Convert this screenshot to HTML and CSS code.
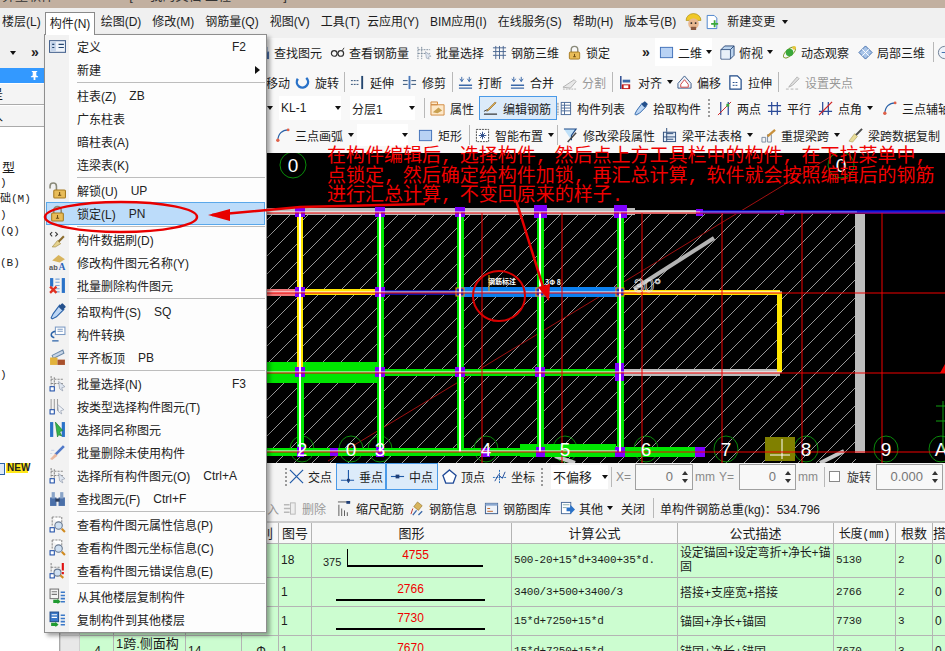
FILE: index.html
```html
<!DOCTYPE html>
<html lang="zh">
<head>
<meta charset="utf-8">
<title>钢筋算量软件</title>
<link rel="stylesheet" href="styles.css">
</head>
<body>
<svg class="defs" width="0" height="0">
<defs>
<symbol id="lock" viewBox="0 0 16 16"><path d="M4.500 8V5a3.500 3.500 0 0 1 7 0v3" fill="none" stroke="#8a8a7a" stroke-width="1.500"/><rect x="2.500" y="7.500" width="11" height="7.500" rx="1" fill="#e8bc58" stroke="#a57a20"/><path d="M8 9.500v3M6.500 12.500h3" stroke="#6b4a10"/></symbol>
<symbol id="unlock" viewBox="0 0 16 16"><path d="M1 6V4a3 3 0 0 1 6 0v4" fill="none" stroke="#8a8a7a" stroke-width="1.500"/><rect x="4.500" y="7.500" width="11" height="7.500" rx="1" fill="#e8bc58" stroke="#a57a20"/><path d="M10 9.500v3M8.500 12.500h3" stroke="#6b4a10"/></symbol>
<symbol id="def" viewBox="0 0 16 16"><rect x=".5" y="2.500" width="15" height="11" fill="#eef3fa" stroke="#47648f"/><rect x="1.500" y="3.500" width="5" height="9" fill="#c4d4ea"/><path d="M3 6h2M3 9h2M9 6h5M9 9h5" stroke="#24466f"/></symbol>
<symbol id="brush" viewBox="0 0 16 16"><path d="M1 3l2-2M1 3l2 2M6 1l2 2-2 2" fill="none" stroke="#333"/><path d="M14 5L8 11" stroke="#8a6b2c" stroke-width="2"/><path d="M8 9l3 3-5 3-3 0z" fill="#e5d28e" stroke="#a08a45" stroke-width=".6"/></symbol>
<symbol id="rename" viewBox="0 0 16 16"><path d="M3 6l6-5 6 4-5 3z" fill="#d8b45c"/><text x="0" y="15" class="icn" fill="#555">ab</text><text x="9" y="15" class="icb" fill="#2a62b8">A</text></symbol>
<symbol id="bdel" viewBox="0 0 16 16"><rect x="1" y="1" width="3" height="8" fill="#2a72c8"/><rect x="12" y="1" width="3" height="14" fill="#2a72c8"/><path d="M6 2h4M6 5h4M6 8h4M6 11h4M6 14h4" stroke="#7ca6d8"/><path d="M1 9l6 6M7 9l-6 6" stroke="#e03020" stroke-width="2.200"/></symbol>
<symbol id="pick" viewBox="0 0 16 16"><path d="M10 2l4 4-7 7-4 2-1-1 2-4z" fill="#bcd6f4" stroke="#2a62a8"/><rect x="10" y="1" width="5" height="5" rx="1" fill="#24508c" transform="rotate(45 12.500 3.500)"/></symbol>
<symbol id="conv" viewBox="0 0 16 16"><rect x="6" y="1" width="9" height="7" fill="#fff" stroke="#7b9ac4"/><path d="M8 3h5M8 5h5" stroke="#7b9ac4"/><path d="M6 5C1 6 1 10 5 11M3 14h6" fill="none" stroke="#2a62a8" stroke-width="1.400"/></symbol>
<symbol id="flush" viewBox="0 0 16 16"><path d="M3 6l10-5 1 3-10 5z" fill="#c8d6e8" stroke="#6b88a8"/><rect x="1" y="8" width="7" height="7" fill="#e2b23c"/><rect x="8" y="10" width="7" height="5" fill="#a8502c"/></symbol>
<symbol id="sel" viewBox="0 0 16 16"><path d="M2 1v11M5 2v10M2 4h12M2 8h12" stroke="#8a8a8a" stroke-dasharray="2 1"/><path d="M9 6l6 5-3 1 1 3-3-2z" fill="#dfe6f0" stroke="#8a96a8" stroke-width=".6"/><rect x="1" y="11" width="4" height="4" fill="#fff" stroke="#1f4fa8"/></symbol>
<symbol id="type" viewBox="0 0 16 16"><path d="M2 1v11M5 1v11M8 1v11" stroke="#a0a0a0"/><path d="M8 6l6 5-3 1 1 3-3-2z" fill="#eef2f8" stroke="#8a96a8" stroke-width=".6"/><rect x="1" y="11" width="4" height="4" fill="#fff" stroke="#1f4fa8"/></symbol>
<symbol id="same" viewBox="0 0 16 16"><rect x="1" y="1" width="3" height="14" fill="#2a72c8"/><rect x="12" y="1" width="3" height="14" fill="#2a72c8"/><path d="M6 1l7 8-3 1 2 4-3-1-1 2z" fill="#37b44a" stroke="#1b7a2c" stroke-width=".6"/></symbol>
<symbol id="unused" viewBox="0 0 16 16"><path d="M14 2L6 10" stroke="#5078c8" stroke-width="2.500"/><path d="M6 9l2 2-5 4-2-1z" fill="#e8b8a0"/><path d="M2 6h3M1 9h2" stroke="#d0d8e8"/></symbol>
<symbol id="binoc" viewBox="0 0 16 16"><rect x="1" y="7" width="6" height="8" fill="#4a6fa8"/><rect x="9" y="7" width="6" height="8" fill="#4a6fa8"/><rect x="2.500" y="2" width="3" height="6" fill="#8aa4c8"/><rect x="10.500" y="2" width="3" height="6" fill="#8aa4c8"/><rect x="6" y="8" width="4" height="3" fill="#2c3f60"/></symbol>
<symbol id="info" viewBox="0 0 16 16"><path d="M3 1h9v9M3 1v9" fill="#fff" stroke="#8a8a8a" stroke-dasharray="2 1"/><rect x="1" y="11" width="4" height="4" fill="#fff" stroke="#1f4fa8"/><circle cx="9" cy="9" r="3.500" fill="#cfe0f2" stroke="#6a7a90"/><path d="M12 12l3 3" stroke="#d08a20" stroke-width="2"/></symbol>
<symbol id="err" viewBox="0 0 16 16"><path d="M2 1v10M2 5h8" stroke="#8a8a8a" stroke-dasharray="2 1"/><rect x="1" y="11" width="4" height="4" fill="#fff" stroke="#1f4fa8"/><circle cx="8" cy="10" r="3.300" fill="#cfe0f2" stroke="#6a7a90"/><path d="M10.500 12.500l3 2.500" stroke="#d08a20" stroke-width="2"/><path d="M13 1v7M13 9.500v2" stroke="#e01010" stroke-width="2"/></symbol>
<symbol id="cfrom" viewBox="0 0 16 16"><rect x="1" y="1" width="8" height="9" fill="#f4f4f4" stroke="#777"/><path d="M2.500 3.500h5M2.500 6h5" stroke="#777"/><path d="M4 11h4v-1l3 3-3 2v-1H4z" fill="#1f9a30"/><path d="M11 4h4M11 7h4M11 10h4M11 13h4" stroke="#3a78c8" stroke-width="1.500"/></symbol>
<symbol id="cto" viewBox="0 0 16 16"><rect x="1" y="1" width="8" height="9" fill="#3a78c8" stroke="#24508c"/><path d="M2.500 3.500h5M2.500 6h5" stroke="#fff"/><path d="M2 11h4v-1l3 3-3 2v-1H2z" fill="#1f9a30"/><path d="M11 4h4M11 7h4M11 10h4M11 13h4" stroke="#3a78c8" stroke-width="1.500"/></symbol>
<symbol id="glasses" viewBox="0 0 16 16"><circle cx="4.500" cy="9" r="3" fill="none" stroke="#333" stroke-width="1.300"/><circle cx="11.500" cy="9" r="3" fill="none" stroke="#333" stroke-width="1.300"/><path d="M7.500 9h1M13 6l2-3" stroke="#333"/></symbol>
<symbol id="batch" viewBox="0 0 16 16"><path d="M1 2v13M5 2v13M1 5h13M1 9h13" stroke="#7a8a9a" stroke-dasharray="2 1"/><path d="M9 7l6 5-3 1 1 2-3-1z" fill="#dfe6f0" stroke="#8a96a8" stroke-width=".6"/></symbol>
<symbol id="rebar3" viewBox="0 0 16 16"><path d="M1 3h14M1 7h14M1 11h14M4 1v14M8 1v14M12 1v14" stroke="#47648f"/></symbol>
<symbol id="sq2" viewBox="0 0 16 16"><rect x="1.500" y="2.500" width="13" height="11" fill="#b8d2f4" stroke="#3f6fb8"/></symbol>
<symbol id="cube" viewBox="0 0 16 16"><path d="M1 5l4-4h10v10l-4 4H1z" fill="#bcd4ee" stroke="#2c4a78"/><path d="M1 5h10v10M11 5l4-4" fill="none" stroke="#2c4a78"/><rect x="1.500" y="5.500" width="9" height="9" fill="#e8f0f8"/></symbol>
<symbol id="orbit" viewBox="0 0 16 16"><ellipse cx="8" cy="8" rx="8" ry="3.500" fill="none" stroke="#7a9a2c" transform="rotate(-40 8 8)"/><circle cx="8" cy="8" r="4" fill="#3aa83a"/><circle cx="13" cy="3" r="2" fill="#e8c83c"/></symbol>
<symbol id="part3" viewBox="0 0 16 16"><path d="M8 1l7 7-7 7-7-7z" fill="#a8c4e8" stroke="#3a68a8"/><path d="M4.500 4.500l7 7M11.500 4.500l-7 7" stroke="#fff"/></symbol>
<symbol id="ext" viewBox="0 0 16 16"><path d="M1 6h9M1 10h9" stroke="#24466f" stroke-dasharray="2 1"/><rect x="12" y="1" width="2" height="14" fill="#24466f"/></symbol>
<symbol id="trim" viewBox="0 0 16 16"><path d="M1 6h5M1 10h5M10 6h5M10 10h5" stroke="#24466f"/><rect x="7" y="1" width="2" height="14" fill="#4a78b8"/></symbol>
<symbol id="brk" viewBox="0 0 16 16"><path d="M1 11h14M1 14h14" stroke="#3a68a8" stroke-width="1.500"/><path d="M4 2v5M2 4l2 3 2-3M12 2v5M10 4l2 3 2-3" fill="none" stroke="#3a68a8"/></symbol>
<symbol id="split" viewBox="0 0 16 16"><path d="M1 13l12-8 2 2-6 7z" fill="#e8e8e8" stroke="#b0b0b0"/><path d="M1 15h14" stroke="#b0b0b0" stroke-dasharray="2 1"/></symbol>
<symbol id="aln" viewBox="0 0 16 16"><path d="M3 1v14" stroke="#1f3f88" stroke-width="1.500"/><rect x="5" y="5" width="8" height="3" fill="#3a68a8"/><rect x="4" y="10" width="9" height="5" fill="#c01818"/><rect x="6" y="11" width="5" height="3" fill="#fff"/></symbol>
<symbol id="off" viewBox="0 0 16 16"><path d="M1 14V9l7-8 7 8v5z" fill="#eef2f8" stroke="#3a5a88"/><path d="M4 13V10l4-5 4 5v3z" fill="#fff" stroke="#d04040"/></symbol>
<symbol id="strch" viewBox="0 0 16 16"><path d="M2 1h8l4 4v10H2z" fill="#fff" stroke="#1f4a88" stroke-width="1.300"/><path d="M5 8h6M5 11h6" stroke="#1f4a88" stroke-dasharray="2 1"/></symbol>
<symbol id="grip" viewBox="0 0 16 16"><path d="M13 2L6 10l-2 3 4-2 7-7z" fill="#e0e0e0" stroke="#b0b0b0"/><path d="M1 15h3M6 15h3M11 15h3" stroke="#b0b0b0"/></symbol>
<symbol id="prop" viewBox="0 0 16 16"><path d="M1 4h14v11H1zM1 1h7v3H1z" fill="#fde8c8" stroke="#d08a40"/><path d="M3 12l6-5 4 3-5 3z" fill="#c8a050"/></symbol>
<symbol id="edit" viewBox="0 0 16 16"><path d="M1 14h14" stroke="#333" stroke-width="1.300"/><path d="M1 11l4-2" stroke="#333"/><path d="M14 2L6 10l-2 1 1-2 8-8z" fill="#e8b050" stroke="#7a5a20" stroke-width=".6"/></symbol>
<symbol id="lst" viewBox="0 0 16 16"><path d="M1 2v13" stroke="#777" stroke-dasharray="2 1"/><rect x="4.500" y="1.500" width="10" height="13" fill="#fff" stroke="#4a6a98"/><path d="M4.500 4.500h10M4.500 7.500h10M4.500 10.500h10M8 1.500v13" stroke="#4a6a98"/></symbol>
<symbol id="twop" viewBox="0 0 16 16"><path d="M4 1v14M12 1v14" stroke="#2a4a98" stroke-width="1.300"/><path d="M1 15L15 1" stroke="#d02020"/><rect x="10" y="3" width="3" height="3" fill="#3aa83a"/></symbol>
<symbol id="para" viewBox="0 0 16 16"><path d="M5 1v14M11 1v14M1 5h14M1 11h14" stroke="#2a4a98" stroke-width="1.300"/></symbol>
<symbol id="angl" viewBox="0 0 16 16"><path d="M5 1v14M11 1v14M1 11h14" stroke="#2a4a98" stroke-width="1.300"/><path d="M1 15L15 1" stroke="#d02020" stroke-width="1.300"/></symbol>
<symbol id="arcp" viewBox="0 0 16 16"><path d="M3 14C3 6 8 2 14 2" fill="none" stroke="#2a62a8" stroke-width="1.300"/><circle cx="3" cy="13" r="1.800" fill="#e06048"/><circle cx="14" cy="2" r="1.500" fill="#e06048"/></symbol>
<symbol id="smart" viewBox="0 0 16 16"><rect x="1.500" y="1.500" width="13" height="13" fill="#fff" stroke="#444" stroke-dasharray="2 1"/><path d="M8 4v8M4 8h8M5.500 5.500l5 5M10.500 5.500l-5 5" stroke="#2a4a88"/></symbol>
<symbol id="fnl" viewBox="0 0 16 16"><path d="M1 1h13L9 8v5" fill="#bfe0f8" stroke="#1f4a88" stroke-width="1.200"/><path d="M5 15l9-10" stroke="#444" stroke-width="1.600"/></symbol>
<symbol id="grid" viewBox="0 0 16 16"><rect x="1.500" y="4.500" width="13" height="10" fill="#e4ecf6" stroke="#2a4a78"/><path d="M1.500 9.500h13M5 4.500v10M5 0v4M5 6h7M5 12h7" stroke="#2a4a78"/></symbol>
<symbol id="span" viewBox="0 0 16 16"><path d="M1 15v-5h4v5zM7 15V7h4v8z" fill="#f4f4f4" stroke="#7a8aa0"/><path d="M15 2L7 9" stroke="#c8903c" stroke-width="2.400"/></symbol>
<symbol id="bbrush" viewBox="0 0 16 16"><path d="M15 1L8 8" stroke="#4a4a4a" stroke-width="2"/><path d="M7 6l3 3-5 6-4-1z" fill="#e8dc98" stroke="#a89a50" stroke-width=".6"/></symbol>
<symbol id="cross" viewBox="0 0 16 16"><path d="M1 1l14 14M15 1L1 15" stroke="#1f5aa8" stroke-width="1.300"/></symbol>
<symbol id="perp" viewBox="0 0 16 16"><path d="M1 12h14M9 1v14" stroke="#1f5aa8" stroke-width="1.200"/><rect x="7.500" y="10.500" width="3" height="3" fill="#1f3f78"/></symbol>
<symbol id="mid" viewBox="0 0 16 16"><path d="M1 8h14" stroke="#1f5aa8" stroke-width="1.200"/><rect x="6" y="6" width="4" height="4" fill="#1f3f78"/></symbol>
<symbol id="top" viewBox="0 0 16 16"><path d="M8 1l7 6-3 8H4L1 7z" fill="#fff" stroke="#1f4a98" stroke-width="1.400"/></symbol>
<symbol id="coord" viewBox="0 0 16 16"><path d="M1 9h14M8 1v14" stroke="#1f6ab8" stroke-dasharray="2 1"/><path d="M3 13l4-7 4 4 3-7" fill="none" stroke="#1f4a98"/></symbol>
<symbol id="scale" viewBox="0 0 16 16"><path d="M1 1h13M2 4v12M5 8v8M8 10v6M11 12v4" stroke="#555"/><rect x="10" y="0" width="4" height="3" fill="#1f3f78"/></symbol>
<symbol id="rinfo" viewBox="0 0 16 16"><path d="M8 1l5 4-4 5-5-4z" fill="#d8b45c" stroke="#8a6a20" stroke-width=".6"/><path d="M3 15l4-5M9 15l4-4" stroke="#3a68a8" stroke-width="1.400"/><path d="M3 8l-2 6" stroke="#c03020"/></symbol>
<symbol id="rlib" viewBox="0 0 16 16"><rect x="1.500" y="2.500" width="13" height="11" fill="#eef3fa" stroke="#3a5a88"/><rect x="1.500" y="2.500" width="13" height="2.500" fill="#8aa8d0"/><path d="M3.500 8h3M3.500 11h6" stroke="#c06020"/></symbol>
<symbol id="other" viewBox="0 0 16 16"><rect x="1.500" y="1.500" width="10" height="12" fill="#fff" stroke="#4a6a98"/><path d="M3 4h7M3 7h4" stroke="#8aa"/><path d="M7 7h4V4l5 5-5 5v-3H7z" fill="#2a72c8"/></symbol>
<symbol id="ghost" viewBox="0 0 16 16"><path d="M1 4h6M1 12h6M1 8h9" stroke="#b8b8b8" stroke-width="1.500"/><rect x="8" y="2" width="5" height="12" fill="#eee" stroke="#b8b8b8"/></symbol>
<symbol id="refresh" viewBox="0 0 16 16"><path d="M12 3A6 6 0 1 1 3 4" fill="none" stroke="#2a72c8" stroke-width="2.600"/></symbol>
<symbol id="person" viewBox="0 0 16 16"><path d="M1 7a7 6.500 0 0 1 14 0z" fill="#f0c828" stroke="#a88a10" stroke-width=".6"/><circle cx="8" cy="10" r="5" fill="#e8b890"/><circle cx="6" cy="9.500" r=".9" fill="#222"/><circle cx="10" cy="9.500" r=".9" fill="#222"/><path d="M5.500 13h5v3h-5z" fill="#8a5a40"/></symbol>
<symbol id="newc" viewBox="0 0 16 16"><path d="M2.500.5h8l3 3v12h-11z" fill="#fff" stroke="#3a78c8"/><path d="M7 9h3V6h2v3h3v2h-3v3h-2v-3H7z" fill="#3aa83a"/></symbol>
<symbol id="zoomg" viewBox="0 0 16 16"><circle cx="8" cy="8" r="6.500" fill="#eef3fa" stroke="#6a7a90"/><path d="M5 8h6" stroke="#3a68a8"/></symbol>
</defs>
</svg>

<div class="app">
<header class="titlebar"><span class="ttext">算量软件 GGJ2013</span><span class="ttext tpath">[D:\我的文档\工程1.GGJ12]</span></header>

<nav class="menubar">
<span class="mb mb1">楼层(L)</span><span class="mb mb2 open">构件(N)</span><span class="mb">绘图(D)</span><span class="mb">修改(M)</span><span class="mb">钢筋量(Q)</span><span class="mb">视图(V)</span><span class="mb mbt">工具(T)</span><span class="mb">云应用(Y)</span><span class="mb">BIM应用(I)</span><span class="mb">在线服务(S)</span><span class="mb">帮助(H)</span><span class="mb">版本号(B)</span>
<svg class="ic ic-av"><use href="#person"/></svg><svg class="ic ic-new"><use href="#newc"/></svg><span class="mb mbn">新建变更</span><i class="caret"></i>
</nav>

<div class="body">
<aside class="side">
<div class="sidebar-top"><i class="caret side-caret"></i><span class="chev">»</span></div>
<div class="side-title"><svg class="pin" viewBox="0 0 10 12"><path d="M2 1h6v1H7v4l2 1v1H6v3H4V8H1V7l2-1V2H2z" fill="#fff"/></svg></div>
<div class="side-tab">是</div>
<div class="side-tab">入</div>
<ul class="tree">
<li class="t-first">型</li><li>)</li><li>础(M)</li><li>)</li><li>(Q)</li><li></li><li>(B)</li><li></li><li></li><li></li><li></li><li></li><li></li><li>)</li><li></li><li></li><li></li><li></li><li></li>
<li class="t-new"><span class="t-doc"></span><span class="t-badge">NEW</span></li>
</ul>
</aside>

<main class="main">
<div class="bar r1">
<div class="tool"><svg class="ic"><use href="#binoc"/></svg>查找图元</div>
<div class="tool"><svg class="ic"><use href="#glasses"/></svg>查看钢筋量</div>
<div class="tool"><svg class="ic"><use href="#batch"/></svg>批量选择</div>
<div class="tool"><svg class="ic"><use href="#rebar3"/></svg>钢筋三维</div>
<div class="tool"><svg class="ic"><use href="#lock"/></svg>锁定</div>
<div class="chev">»</div>
<div class="tool whitebox"><svg class="ic"><use href="#sq2"/></svg>二维<i class="caret car-r"></i></div>
<div class="tool"><svg class="ic"><use href="#cube"/></svg>俯视<i class="caret"></i></div>
<div class="tool"><svg class="ic"><use href="#orbit"/></svg>动态观察</div>
<div class="tool"><svg class="ic"><use href="#part3"/></svg>局部三维</div>
<div class="tool"><i class="vsep"></i><svg class="ic"><use href="#zoomg"/></svg></div>
</div>

<div class="bar r2">
<div class="tool">移动</div>
<div class="tool"><svg class="ic"><use href="#refresh"/></svg>旋转</div>
<i class="vsep"></i>
<div class="tool"><svg class="ic"><use href="#ext"/></svg>延伸</div>
<div class="tool"><svg class="ic"><use href="#trim"/></svg>修剪</div>
<i class="vsep"></i>
<div class="tool"><svg class="ic"><use href="#brk"/></svg>打断</div>
<div class="tool"><svg class="ic"><use href="#brk"/></svg>合并</div>
<div class="tool dis"><svg class="ic"><use href="#split"/></svg>分割</div>
<i class="vsep"></i>
<div class="tool"><svg class="ic"><use href="#aln"/></svg>对齐<i class="caret"></i></div>
<div class="tool"><svg class="ic"><use href="#off"/></svg>偏移</div>
<div class="tool"><svg class="ic"><use href="#strch"/></svg>拉伸</div>
<i class="vsep"></i>
<div class="tool dis"><svg class="ic"><use href="#grip"/></svg>设置夹点</div>
</div>

<div class="bar r3">
<i class="caret"></i>
<div class="combo">KL-1<i class="caret car-r"></i></div>
<div class="combo">分层1<i class="caret car-r"></i></div>
<i class="vsep"></i>
<div class="tool"><svg class="ic"><use href="#prop"/></svg>属性</div>
<div class="tool active"><svg class="ic"><use href="#edit"/></svg>编辑钢筋</div>
<div class="tool"><svg class="ic"><use href="#lst"/></svg>构件列表</div>
<div class="tool"><svg class="ic"><use href="#pick"/></svg>拾取构件</div>
<i class="dots"></i>
<div class="tool"><svg class="ic"><use href="#twop"/></svg>两点</div>
<div class="tool"><svg class="ic"><use href="#para"/></svg>平行</div>
<div class="tool"><svg class="ic"><use href="#angl"/></svg>点角<i class="caret"></i></div>
<div class="tool"><svg class="ic"><use href="#arcp"/></svg>三点辅轴</div>
</div>

<div class="bar r4">
<div class="tool"><svg class="ic"><use href="#arcp"/></svg>三点画弧<i class="caret"></i></div>
<div class="combo combo-e"><i class="caret car-r"></i></div>
<div class="tool"><svg class="ic"><use href="#sq2"/></svg>矩形</div>
<i class="vsep"></i>
<div class="tool"><svg class="ic"><use href="#smart"/></svg>智能布置<i class="caret"></i></div>
<i class="vsep"></i>
<div class="tool"><svg class="ic"><use href="#fnl"/></svg>修改梁段属性</div>
<div class="tool"><svg class="ic"><use href="#grid"/></svg>梁平法表格<i class="caret"></i></div>
<div class="tool"><svg class="ic"><use href="#span"/></svg>重提梁跨<i class="caret"></i></div>
<div class="tool"><svg class="ic"><use href="#bbrush"/></svg>梁跨数据复制</div>
</div>

<svg class="canvas" viewBox="60 152 885 310" width="885" height="310">
<defs>
<pattern id="hatch" width="18" height="18" patternUnits="userSpaceOnUse"><path d="M0 18L18 0" stroke="#d8d8d8" stroke-width=".7"/></pattern>
</defs>
<rect x="60" y="152" width="885" height="310" fill="#000"/>
<rect x="60" y="212" width="796" height="250" fill="url(#hatch)"/>
<path d="M328 460L840 150" stroke="#a01010" stroke-width="1"/>
<path d="M634 288L714 237" stroke="#b4b4b4" stroke-width="4"/>
<g class="axis">
<ellipse cx="293" cy="164" rx="13" ry="13"/><ellipse cx="841" cy="164" rx="13" ry="13"/>
<ellipse cx="302" cy="448" rx="12" ry="13"/><ellipse cx="351" cy="448" rx="12" ry="13"/><ellipse cx="380" cy="448" rx="12" ry="13"/><ellipse cx="486" cy="448" rx="12" ry="13"/><ellipse cx="565" cy="448" rx="12" ry="13"/><ellipse cx="646" cy="448" rx="12" ry="13"/><ellipse cx="726" cy="448" rx="12" ry="13"/><ellipse cx="806" cy="448" rx="12" ry="13"/><ellipse cx="886" cy="448" rx="12" ry="13"/><ellipse cx="941" cy="448" rx="12" ry="13"/>
</g>
<rect x="765" y="436" width="30" height="24" fill="#808000"/>
<path d="M782 438v20M770 454h20" stroke="#fff"/>
<path d="M555 455l20 7M820 462l24-12" stroke="#c4c4c4" stroke-width="4"/>
<rect x="855" y="212" width="10" height="240" fill="#bcbcbc"/>
<rect x="267" y="207" width="368" height="7" fill="#bcbcbc"/>
<rect x="635" y="209" width="70" height="4" fill="#bcbcbc"/>
<rect x="700" y="209" width="245" height="4" fill="#0000b0"/>
<rect x="267" y="361" width="111" height="21" fill="#00e600"/>
<rect x="378" y="368" width="242" height="7" fill="#00e600"/>
<rect x="620" y="368" width="160" height="7" fill="#bcbcbc"/>
<rect x="267" y="447" width="353" height="8" fill="#00e600"/>
<rect x="520" y="443" width="96" height="13" fill="#00e600"/>
<rect x="625" y="446" width="78" height="10" fill="#00e600"/>
<rect x="297" y="211" width="6" height="160" fill="#ffe600"/>
<g fill="#00e600"><rect x="297" y="371" width="7" height="80"/><rect x="377" y="211" width="7" height="240"/><rect x="457" y="211" width="7" height="240"/><rect x="537" y="211" width="7" height="240"/><rect x="617" y="211" width="7" height="240"/></g>
<rect x="267" y="288" width="33" height="7" fill="#f07878"/>
<rect x="300" y="288" width="80" height="6" fill="#ffe600"/>
<rect x="380" y="289" width="80" height="5" fill="#1010a0"/>
<rect x="460" y="286" width="160" height="10" fill="#0c80f0"/>
<rect x="620" y="289" width="160" height="5" fill="#ffe600"/>
<rect x="777" y="291" width="5" height="80" fill="#ffe600"/>
<g class="nodes"><rect x="295" y="206" width="10" height="10"/><rect x="375" y="206" width="10" height="10"/><rect x="455" y="206" width="10" height="10"/><rect x="534" y="204" width="13" height="13"/><rect x="614" y="204" width="13" height="13"/><rect x="696" y="208" width="7" height="7"/><rect x="780" y="209" width="4" height="5"/>
<rect x="295" y="286" width="10" height="10"/><rect x="375" y="286" width="10" height="10"/>
<rect x="295" y="366" width="10" height="10"/><rect x="375" y="366" width="10" height="10"/><rect x="455" y="366" width="10" height="10"/><rect x="535" y="366" width="10" height="10"/><rect x="615" y="362" width="9" height="18"/>
<rect x="297" y="446" width="7" height="10"/><rect x="330" y="447" width="8" height="8"/><rect x="376" y="446" width="8" height="10"/><rect x="481" y="447" width="9" height="9"/><rect x="536" y="446" width="9" height="10"/><rect x="615" y="446" width="10" height="10"/><rect x="695" y="446" width="10" height="10"/></g>
<g class="ends"><rect x="456" y="287" width="8" height="8"/><rect x="536" y="287" width="8" height="8"/><rect x="616" y="287" width="8" height="8"/></g>
<g stroke="#fff" stroke-width="2"><path d="M300 211v240M380 211v240M460 211v240M540 211v240M620 211v240"/></g>
<g stroke="#fff" stroke-width="1.200"><path d="M267 211h590M267 291h515M267 371h515M267 450h350"/></g>
<g stroke="#f00000" stroke-width="1"><path d="M482 212v250M562 212v250M642 212v250M722 212v250M802 212v250M882 212v250M267 292h678M267 372h678M267 451h678M267 212h678"/></g>
<path d="M700 211h245" stroke="#3030ff" stroke-width="1"/>
<g class="tiny"><text x="488" y="283">钢筋标注</text><text x="545" y="284">3Φ 8</text></g>
<path d="M489 290v-16" stroke="#f0a000"/>
<text class="ang" x="634" y="291">30°</text>
<g class="axt"><text x="293" y="171">0</text><text x="841" y="171">0</text><text x="302" y="455">2</text><text x="351" y="455">0</text><text x="380" y="455">3</text><text x="486" y="455">4</text><text x="565" y="455">5</text><text x="646" y="455">6</text><text x="726" y="455">7</text><text x="806" y="455">8</text><text x="886" y="455">9</text><text x="941" y="455">A</text></g>
<path d="M943 400v50M936 405h9M936 420h9" stroke="#10a010" fill="none"/>
<path d="M940 372l5-9v9z" fill="#f00000"/>
</svg>

<div class="bar r5">
<i class="caret hid"></i>
<i class="dots"></i>
<div class="tool"><svg class="ic"><use href="#cross"/></svg>交点</div>
<div class="tool active"><svg class="ic"><use href="#perp"/></svg>垂点</div>
<div class="tool active"><svg class="ic"><use href="#mid"/></svg>中点</div>
<div class="tool"><svg class="ic"><use href="#top"/></svg>顶点</div>
<div class="tool"><svg class="ic"><use href="#coord"/></svg>坐标</div>
<i class="dots"></i>
<div class="combo combo-w">不偏移<i class="caret car-r"></i></div>
<i class="vsep"></i>
<span class="lab">X=</span><div class="spin">0<i class="updn"></i></div><span class="lab">mm</span><span class="lab">Y=</span><div class="spin">0<i class="updn"></i></div><span class="lab">mm</span>
<i class="vsep"></i><i class="check"></i><span class="lab lab-d">旋转</span><div class="spin">0.000<i class="updn"></i></div>
</div>

<div class="bar r6">
<div class="tool dis">入</div>
<div class="tool dis"><svg class="ic"><use href="#ghost"/></svg>删除</div>
<div class="tool"><svg class="ic"><use href="#scale"/></svg>缩尺配筋</div>
<div class="tool"><svg class="ic"><use href="#rinfo"/></svg>钢筋信息</div>
<div class="tool"><svg class="ic"><use href="#rlib"/></svg>钢筋图库</div>
<div class="tool"><svg class="ic"><use href="#other"/></svg>其他<i class="caret"></i></div>
<div class="tool">关闭</div>
<i class="vsep"></i>
<div class="tool">单构件钢筋总重(kg)：534.796</div>
</div>

<table class="grid-t">
<colgroup><col class="c0"><col class="c1"><col class="c2"><col class="c3"><col class="c4"><col class="c5"><col class="c6"><col class="c7"><col class="c8"><col class="c9"><col class="c10"><col class="c11"></colgroup>
<thead><tr><th></th><th></th><th></th><th></th><th>级别</th><th>图号</th><th>图形</th><th>计算公式</th><th>公式描述</th><th class="mono">长度(mm)</th><th>根数</th><th>搭</th></tr></thead>
<tbody>
<tr class="h34"><td class="gr"></td><td></td><td></td><td></td><td></td><td>18</td><td class="fig"><span class="n375">375</span><div class="shape shape-l"><b>4755</b></div></td><td class="mono">500-20+15*d+3400+35*d.</td><td class="wrap">设定锚固+设定弯折+净长+锚固</td><td class="mono">5130</td><td class="mono">2</td><td>0</td></tr>
<tr class="h29"><td class="gr"></td><td></td><td></td><td></td><td></td><td>1</td><td class="fig"><div class="shape"><b>2766</b></div></td><td class="mono">3400/3+500+3400/3</td><td>搭接+支座宽+搭接</td><td class="mono">2766</td><td class="mono">2</td><td>0</td></tr>
<tr class="h29"><td class="gr"></td><td></td><td></td><td></td><td></td><td>1</td><td class="fig"><div class="shape"><b>7730</b></div></td><td class="mono">15*d+7250+15*d</td><td>锚固+净长+锚固</td><td class="mono">7730</td><td class="mono">3</td><td>0</td></tr>
<tr class="h29"><td class="gr"></td><td class="ctr">4</td><td class="name">1跨.侧面构造筋1</td><td>14</td><td class="ctr">Φ</td><td>1</td><td class="fig"><div class="shape"><b>7670</b></div></td><td class="mono">15*d+7250+15*d</td><td>锚固+净长+锚固</td><td class="mono">7670</td><td class="mono">3</td><td>0</td></tr>
</tbody>
</table>
</main>
</div>

<ul class="menu">
<li class="mi"><svg class="mic"><use href="#def"/></svg>定义<span class="kr">F2</span></li>
<li class="mi">新建<i class="sub"></i></li>
<li class="ms"></li>
<li class="mi">柱表(Z)<span class="ks">ZB</span></li>
<li class="mi">广东柱表</li>
<li class="mi">暗柱表(A)</li>
<li class="mi">连梁表(K)</li>
<li class="ms"></li>
<li class="mi"><svg class="mic"><use href="#unlock"/></svg>解锁(U)<span class="ks">UP</span></li>
<li class="mi hot"><svg class="mic"><use href="#lock"/></svg>锁定(L)<span class="ks">PN</span></li>
<li class="ms"></li>
<li class="mi"><svg class="mic"><use href="#brush"/></svg>构件数据刷(D)</li>
<li class="mi"><svg class="mic"><use href="#rename"/></svg>修改构件图元名称(Y)</li>
<li class="mi"><svg class="mic"><use href="#bdel"/></svg>批量删除构件图元</li>
<li class="ms"></li>
<li class="mi"><svg class="mic"><use href="#pick"/></svg>拾取构件(S)<span class="ks">SQ</span></li>
<li class="mi"><svg class="mic"><use href="#conv"/></svg>构件转换</li>
<li class="mi"><svg class="mic"><use href="#flush"/></svg>平齐板顶<span class="ks">PB</span></li>
<li class="ms"></li>
<li class="mi"><svg class="mic"><use href="#sel"/></svg>批量选择(N)<span class="kr">F3</span></li>
<li class="mi"><svg class="mic"><use href="#type"/></svg>按类型选择构件图元(T)</li>
<li class="mi"><svg class="mic"><use href="#same"/></svg>选择同名称图元</li>
<li class="mi"><svg class="mic"><use href="#unused"/></svg>批量删除未使用构件</li>
<li class="mi"><svg class="mic"><use href="#sel"/></svg>选择所有构件图元(O)<span class="ks">Ctrl+A</span></li>
<li class="mi"><svg class="mic"><use href="#binoc"/></svg>查找图元(F)<span class="ks">Ctrl+F</span></li>
<li class="ms"></li>
<li class="mi"><svg class="mic"><use href="#info"/></svg>查看构件图元属性信息(P)</li>
<li class="mi"><svg class="mic"><use href="#info"/></svg>查看构件图元坐标信息(C)</li>
<li class="mi"><svg class="mic"><use href="#err"/></svg>查看构件图元错误信息(E)</li>
<li class="ms"></li>
<li class="mi"><svg class="mic"><use href="#cfrom"/></svg>从其他楼层复制构件</li>
<li class="mi"><svg class="mic"><use href="#cto"/></svg>复制构件到其他楼层</li>
</ul>

<svg class="marks" viewBox="0 0 945 651" width="945" height="651">
<ellipse cx="121" cy="217" rx="76" ry="15" fill="none" stroke="#e80000" stroke-width="2.500"/>
<path d="M212 215L300 207 425 204" fill="none" stroke="#e80000" stroke-width="2.500"/>
<path d="M208 215l22-6v12z" fill="#e80000"/>
<path d="M516 200L544 290" stroke="#e80000" stroke-width="2.500"/>
<path d="M549 301l-11-14 12-3z" fill="#e80000"/>
<ellipse cx="499" cy="296" rx="26" ry="25" fill="none" stroke="#d80000" stroke-width="2"/>
</svg>
<p class="note">在构件编辑后, 选择构件, 然后点上方工具栏中的构件, 在下拉菜单中,<br>点锁定, 然后确定给构件加锁, 再汇总计算, 软件就会按照编辑后的钢筋<br>进行汇总计算, 不变回原来的样子.</p>
</div>
</body>
</html>
```
FILE: styles.css
```css
*{box-sizing:border-box}
html,body{margin:0;padding:0;width:945px;height:651px;overflow:hidden}
body{font-family:"Liberation Sans","Noto Sans CJK SC",sans-serif;font-size:12px;color:#1c1c1c;background:#f0f0f0}
.defs{display:block;width:0;height:0;overflow:hidden}
.icn{font:bold 7px "Liberation Sans",sans-serif}
.icb{font:bold 9px "Liberation Serif",serif}
.app{position:relative;width:945px;height:651px;overflow:hidden}

.titlebar{height:8px;background:#c2b0a0;overflow:hidden;display:flex;padding-left:2px;line-height:16px}
.ttext{font-size:13px;margin-top:-12px;color:#333;height:16px}
.tpath{margin-left:16px}

.menubar{height:27px;display:flex;align-items:center;background:#f0f0f0;padding-left:2px;white-space:nowrap}
.mb{margin-right:11px;line-height:14px}
.mb1{margin-right:4px}
.mb2{margin-right:6px}
.mbt{margin-right:7px}
.open{height:23px;margin-top:4px;padding:4px 4px 0;width:50px;background:#fff;border:1px solid #8a8a8a;border-bottom:none;position:relative;z-index:3}
.mbn{margin:0 7px 0 8px}
.ic{width:15px;height:15px;flex:none;display:block}
.ic-av{width:17px;height:17px;margin:0 3px 0 -2px}
.ic-new{width:14px;height:18px}

.caret{display:inline-block;width:0;height:0;border:3.5px solid transparent;border-top:4px solid #111;border-bottom:0;flex:none}
.car-r{margin-left:auto}
.hid{visibility:hidden}
.chev{font-size:14px;line-height:12px;font-weight:bold;color:#222}

.body{display:flex;height:616px}
.side{width:60px;flex:none;background:#fff;overflow:hidden;border-right:1px solid #a8a8a8}
.sidebar-top{height:33px;background:#f0f0f0;display:flex;align-items:center;padding-left:10px;gap:15px}
.side-caret{margin-top:3px}
.side-title{height:15px;background:#3399ff;display:flex;align-items:center;padding-left:30px}
.pin{width:9px;height:11px}
.side-tab{height:21px;margin-top:1px;background:#f4f4f4;border-bottom:1px solid #aaa;font-size:13px;text-indent:-10px;line-height:20px}
.tree{list-style:none;margin:0;padding:0}
.tree li{height:16px;line-height:16px;font-family:"Liberation Mono","Noto Sans CJK SC",monospace;font-size:11px;white-space:nowrap;text-indent:0}
.tree .t-first{margin-top:32px;font-size:13px;padding-left:2px;font-family:"Noto Sans CJK SC",sans-serif}
.t-new{display:flex;align-items:center}
.t-doc{width:5px;height:12px;background:#dfeaf8;border:1px solid #2a62a8;border-left:0;margin-top:-4px}
.t-badge{background:#ffe81a;color:#222;font:bold 10px/10px "Liberation Sans",sans-serif;padding:0 1px;margin:-6px 0 0 1px;width:22px}

.main{width:885px;flex:none;overflow:hidden}
.bar{display:grid;align-items:center;background:#f8f8f8;white-space:nowrap}
.tool{display:flex;align-items:center;gap:5px;height:100%;min-width:0}
.dis{color:#999}
.active{background:#dcebfa;border:1px solid #4a9ae8;padding-left:3px}
.whitebox{background:#fff;margin-right:8px;padding-left:4px}
.vsep{display:block;width:1px;height:20px;background:#b8b8b8;flex:none}
.dots{display:block;width:2px;height:18px;background:repeating-linear-gradient(#9a9a9a 0 2px,transparent 2px 4px)}
.combo{display:flex;align-items:center;height:24px;background:#fff;padding-left:2px}

.r1{height:33px;margin-top:0;padding-left:195px;padding-top:3px;padding-bottom:2px;grid-template-columns:75px 87px 75px 75px 75px 13px 65px 62px 76px 75px 13px;background:linear-gradient(#f0f0f0 3px,#f8f8f8 3px)}
.r1 .tool{gap:4px}
.r1 .tool:last-child{gap:3px}
.r2{height:28px;padding-left:206px;grid-template-columns:29px 49px 6px 52px 50px 6px 52px 52px 50px 6px 59px 51px 50px 7px 75px}
.r3{height:28px;padding-left:207px;grid-template-columns:12px 71px 74px 6px 49px 78px 76px 75px 9px 50px 51px 64px 63px;grid-auto-rows:24px}
.r3 .combo{margin-right:9px}
.r3 .active{height:24px}
.r4{height:29px;padding-left:215px;grid-template-columns:82px 61px 51px 6px 82px 6px 99px 99px 87px 88px;grid-auto-rows:22px}
.r4 .combo{height:22px;margin-right:10px}

.canvas{display:block;width:885px;height:310px}
.axis ellipse{fill:none;stroke:#0a8a0a;stroke-width:1}
.axt text,.ang{fill:#fff;font:19px "Liberation Sans",sans-serif;text-anchor:middle}
.ang{fill:none;stroke:#e8e8e8;stroke-width:.7;text-anchor:start;font-size:18px}
.nodes rect{fill:#7f00ff}
.ends rect{fill:#1030d0;stroke:#f0a000}
.tiny text{fill:#fff;font:bold 7px "Noto Sans CJK SC",sans-serif}

.r5{height:32px;padding:0 0 5px 221px;grid-template-columns:4px 4px 47px 50px 56px 50px 49px 10px 60px 5px 19px 60px 24px 20px 59px 26px 5px 18px 29px 69px;grid-auto-rows:27px;background:#f4f4f4}
.r5 .tool{gap:4px}
.r5 .active:nth-of-type(3){margin-right:0}
.r5 .combo{margin-right:3px;font-size:13px}
.r5 .tool:nth-child(5){margin-right:4px}
.lab{color:#8a8a8a}
.lab-d{color:#333}
.spin{height:26px;border:1px solid #a0a0a0;background:#f8f8f8;display:flex;align-items:center;justify-content:flex-end;padding-right:19px;position:relative;color:#777;margin-right:2px;font-size:13px}
.updn{position:absolute;right:4px;top:6px;width:0;height:0;border:3px solid transparent;border-bottom:4px solid #333;border-top:0}
.updn::after{content:"";position:absolute;left:-3px;top:8px;border:3px solid transparent;border-top:4px solid #333;border-bottom:0}
.check{display:block;width:11px;height:11px;border:1px solid #888;background:#fff}
.r6{height:26px;padding-left:207px;grid-template-columns:16px 54px 73px 74px 76px 61px 32px 7px auto;justify-content:start;background:#f4f4f4}
.r6 .tool{gap:4px}

.grid-t{border-collapse:collapse;table-layout:fixed;width:885px;background:#ccfdd0}
.c0{width:19px}.c1{width:34px}.c2{width:72px}.c3{width:56px}.c4{width:37px}.c5{width:33px}.c6{width:200px}.c7{width:166px}.c8{width:156px}.c9{width:62px}.c10{width:37px}.c11{width:13px}
.grid-t th,.grid-t td{border:1px solid #b4b4b4;padding:0 0 0 2px;overflow:hidden;white-space:nowrap;font-weight:400}
.grid-t thead th{height:21px;background:#f8f8f8;text-align:center;padding:0;font-size:13px;border-top:2px solid #ccc}
.h34 td{height:34px}
.h29 td{height:29px}
.grid-t .gr{background:#e8e8e8;border-color:#d0d0d0}
.mono{font-family:"Liberation Mono","Noto Sans CJK SC",monospace;font-size:11px;letter-spacing:-.2px}
.grid-t thead .mono{font-size:12px}
.grid-t .wrap{white-space:normal;line-height:14px;letter-spacing:-.2px}
.grid-t .name{white-space:normal;line-height:15px;font-size:13px;vertical-align:top}
.ctr{text-align:center}
.fig{padding:0}
.shape{margin:0 26px 0 22px;height:18px;border-bottom:2px solid #000;text-align:center;line-height:12px}
.shape b{font:12px/12px "Liberation Sans",sans-serif;color:#f00000}
.fig .shape-l{margin:0 28px 4px 33px;border-left:1px solid #000;height:18px}
.n375{float:left;margin:7px 0 0 9px;font-size:11px}

.menu{position:absolute;left:44px;top:34px;width:223px;height:599px;margin:0;padding:0 1px;list-style:none;background:linear-gradient(90deg,#f2f2f2 24px,#fdfdfd 24px);border:1px solid #8e8e8e;box-shadow:3px 3px 4px rgba(0,0,0,.35);z-index:2}
.mi{height:23px;display:flex;align-items:center;padding-left:31px;position:relative;white-space:nowrap;color:#222}
.mic{position:absolute;left:3px;top:3px;width:17px;height:17px}
.ms{height:3px;margin-left:31px;position:relative}
.ms::after{content:"";position:absolute;left:0;right:0;top:1px;height:1px;background:#bdbdbd}
.hot{background:#bcdcfa;outline:1px solid #5aa8ea;outline-offset:-1px}
.ks{margin-left:13px}
.kr{margin-left:auto;padding-right:19px}
.sub{position:absolute;right:5px;top:8px;border:4px solid transparent;border-left:5px solid #111;border-right:0}

.marks{position:absolute;left:0;top:0;z-index:4;pointer-events:none}
.note{position:absolute;left:327px;top:148px;margin:0;z-index:5;color:#f00000;font:19px/19.500px "Liberation Mono","Noto Sans CJK SC",monospace;word-spacing:-4px;white-space:nowrap}
```
